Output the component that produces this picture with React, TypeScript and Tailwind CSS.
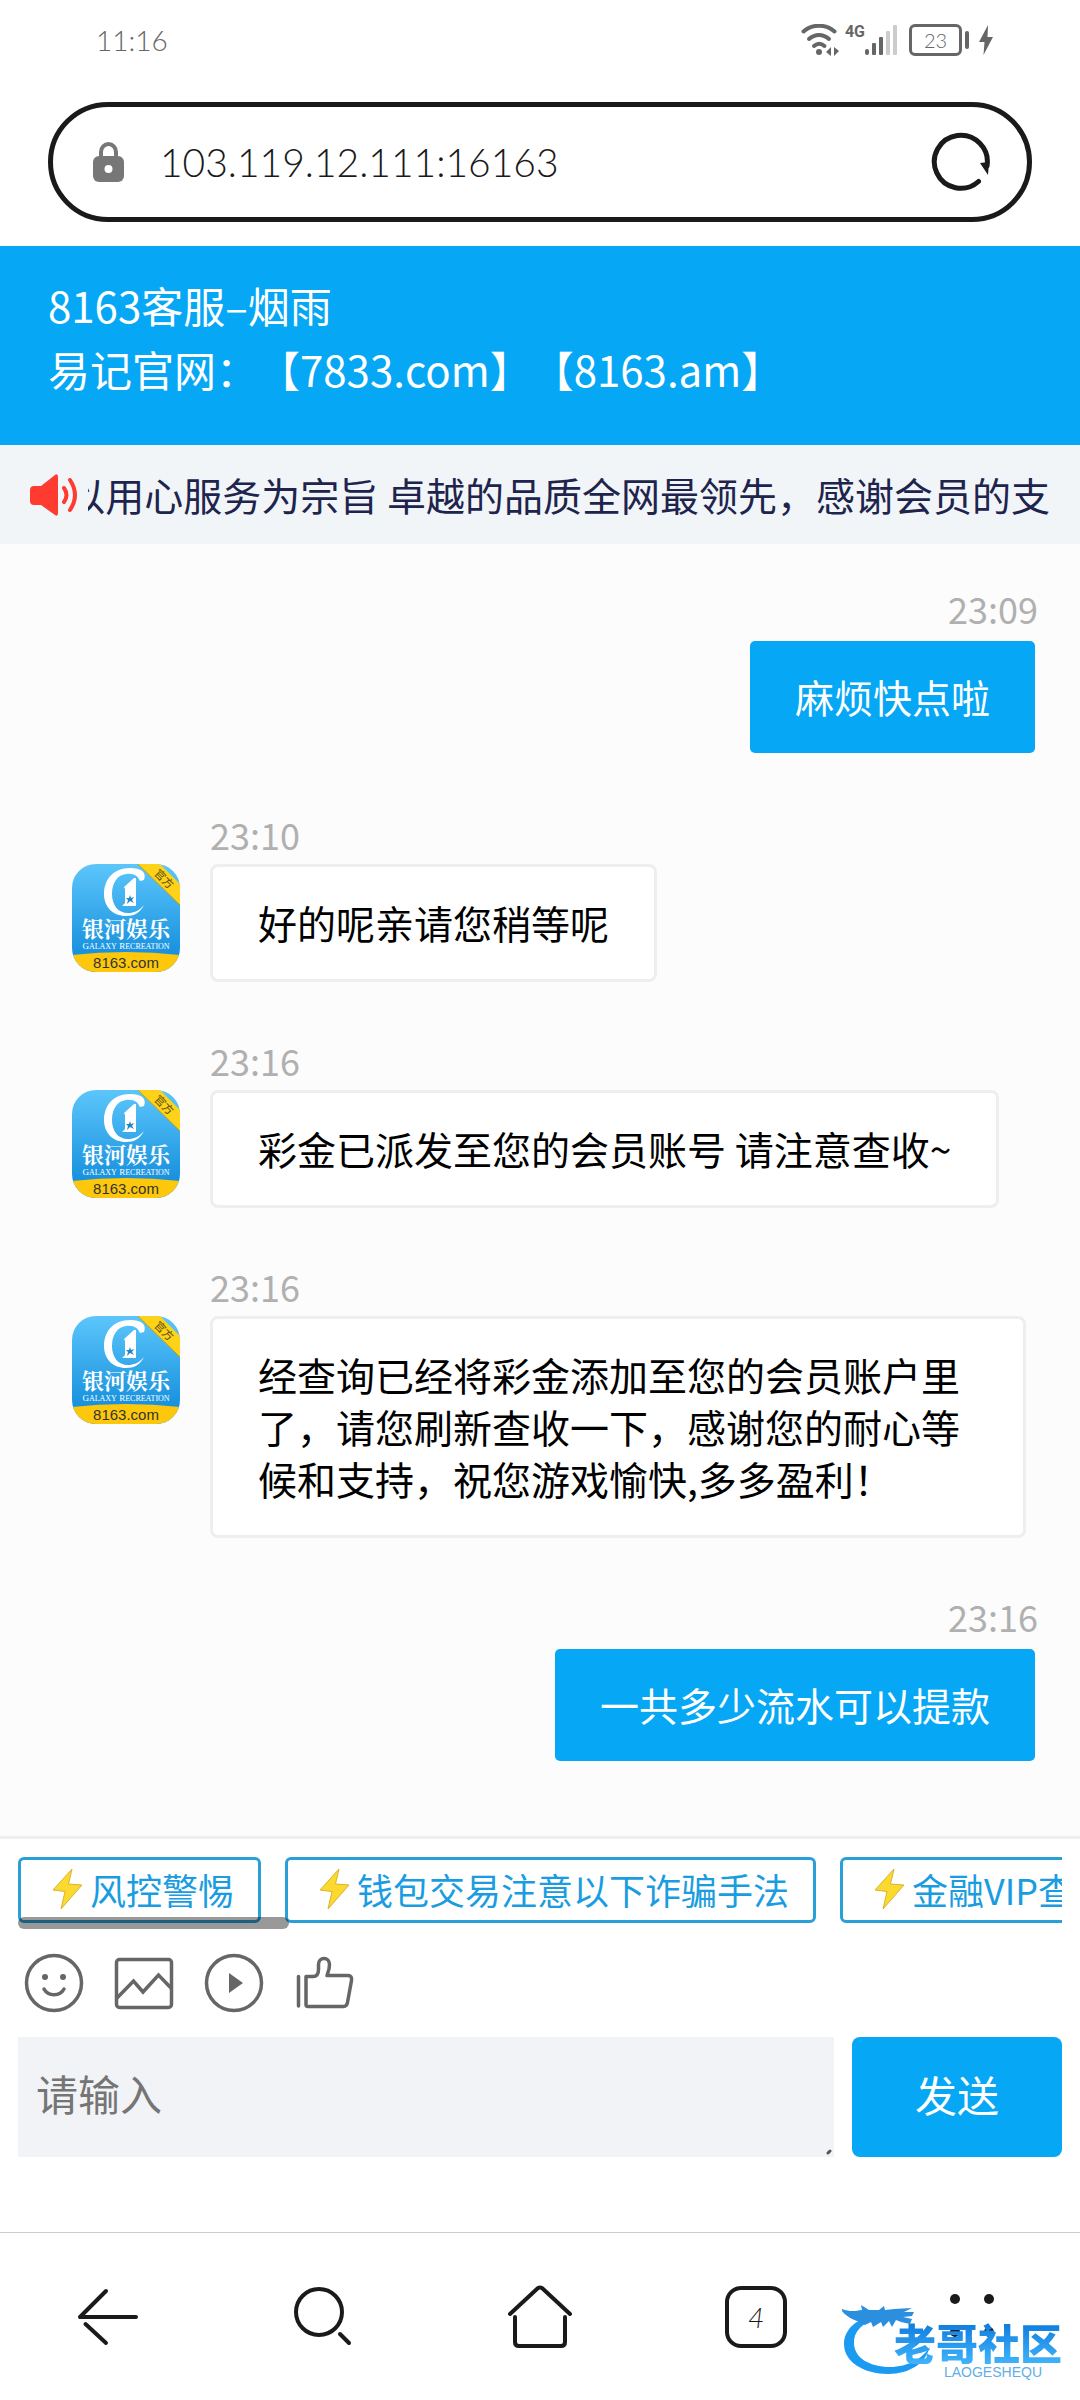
import { useState } from 'react';

type Message = {
  time: string;
  text: string;
  mine?: boolean;
};

const messages: Message[] = [
  { time: '23:09', text: '麻烦快点啦', mine: true },
  { time: '23:10', text: '好的呢亲请您稍等呢' },
  { time: '23:16', text: '彩金已派发至您的会员账号 请注意查收~' },
  { time: '23:16', text: '经查询已经将彩金添加至您的会员账户里了，请您刷新查收一下，感谢您的耐心等候和支持，祝您游戏愉快,多多盈利！' },
  { time: '23:16', text: '一共多少流水可以提款', mine: true },
];

const quickLinks = ['风控警惕', '钱包交易注意以下诈骗手法', '金融VIP查'];

function StatusBar() {
  return (
    <div className="flex h-20 items-center justify-between pl-24 pr-[87px] font-['Lato','Liberation_Sans',sans-serif] text-[#666]">
      <span className="text-[28px] font-light">11:16</span>
      <div className="flex items-center">
        <svg width="38" height="32" viewBox="0 0 38 32" fill="none" stroke="#666" strokeWidth="4" strokeLinecap="round">
          <path d="M2.500 7.500C11 -.2 25 -.2 33.500 7.500" />
          <path d="M8 15c6-5.500 14-5.500 20 0" />
          <path d="M13 22c3.500-3 7-3 10.500 0" />
          <circle cx="18" cy="28" r="3" fill="#666" stroke="none" />
          <path d="M25 28l5-5v9zM38 27l-5-4v9z" fill="#666" stroke="none" />
        </svg>
        <span className="ml-1.5 mb-4 font-['Roboto',sans-serif] text-base font-bold leading-4">4G</span>
        <svg width="32" height="32" viewBox="0 0 32 32">
          <rect x="0" y="25" width="4" height="6" rx="2" fill="#666" />
          <rect x="7" y="19" width="4" height="12" rx="1" fill="#666" />
          <rect x="14" y="13" width="4" height="18" rx="1" fill="#666" />
          <rect x="21" y="7" width="4" height="24" rx="1" fill="#ccc" />
          <rect x="28" y="1" width="4" height="30" rx="1" fill="#ccc" />
        </svg>
        <span className="ml-3 flex h-8 w-[53px] items-center justify-center rounded-md border-3 border-[#666] text-xl font-light">23</span>
        <span className="ml-[3px] h-[18px] w-1 rounded-sm bg-[#666]" />
        <svg className="ml-2.5" width="14" height="30" viewBox="0 0 14 30" fill="#666">
          <path d="M9 0L0 17h5.500L4.500 30 14 12H8.500z" />
        </svg>
      </div>
    </div>
  );
}

function AddressBar() {
  return (
    <div className="mx-12 mt-[22px] mb-6 flex h-[120px] items-center rounded-full border-5 border-[#1a1a1a] bg-white pl-10 pr-9">
      <svg width="31" height="40" viewBox="0 0 31 40">
        <path d="M8 16V10a7.500 8 0 0 1 15 0v6" fill="none" stroke="#777" strokeWidth="4" />
        <rect x="0" y="14" width="31" height="26" rx="6" fill="#777" />
        <circle cx="15.500" cy="27" r="4" fill="#fff" />
      </svg>
      <input
        aria-label="URL"
        defaultValue="103.119.12.111:16163"
        className="ml-9 min-w-0 flex-1 bg-transparent font-['Lato','Liberation_Sans',sans-serif] text-[39px] font-light text-[#1a1a1a] outline-none"
      />
      <button type="button" aria-label="刷新">
        <svg width="60" height="60" viewBox="0 0 60 60" fill="none">
          <path d="M47.500 49.500A26.500 26.500 0 1 1 56 34" stroke="#1a1a1a" strokeWidth="5" strokeLinecap="round" />
          <path d="M49 31l9-1-1 13z" fill="#1a1a1a" />
        </svg>
      </button>
    </div>
  );
}

function Notice() {
  return (
    <div className="flex h-[99px] items-center bg-[#f1f5f8] px-[30px]">
      <svg className="shrink-0" width="48" height="42" viewBox="0 0 48 42">
        <path d="M4 12h7L25 1q3-2 3 2v36q0 4-3 2L11 31H4q-4 0-4-4V16q0-4 4-4z" fill="#ff3b30" />
        <path d="M34 14q5 7 0 14M40 6q10 15 0 30" fill="none" stroke="#ff3b30" strokeWidth="4" strokeLinecap="round" />
      </svg>
      <div className="ml-2.5 flex min-w-0 flex-1 justify-end overflow-hidden">
        <p className="pb-0.5 text-[39px] leading-[52px] whitespace-nowrap text-[#20244d]">
          以用心服务为宗旨 卓越的品质全网最领先，感谢会员的支
        </p>
      </div>
    </div>
  );
}

function Avatar() {
  return (
    <svg className="mt-[52px] shrink-0" width="108" height="108" viewBox="0 0 108 108">
      <defs>
        <linearGradient id="sky" x1="0" y1="0" x2="0" y2="1">
          <stop offset="0" stopColor="#5cc6fb" />
          <stop offset="1" stopColor="#0a86d8" />
        </linearGradient>
        <clipPath id="tile">
          <rect width="108" height="108" rx="24" />
        </clipPath>
      </defs>
      <g clipPath="url(#tile)">
        <rect width="108" height="108" fill="url(#sky)" />
        <path d="M66 0h22l20 20v21z" fill="#ffd21a" />
        <path d="M66 0l42 41" stroke="#c9a400" strokeWidth="1" />
        <text x="92" y="19" fontSize="11" textAnchor="middle" transform="rotate(45 92 15)" fill="#5a4a10">官方</text>
        <path
          d="M72 16C75 8 69 4 58 4 41 4 32 16 32 30c0 13 9 22 22 22 8 0 14-3 18-11-5 6-10 8-16 8-10 0-16-8-16-19 0-12 6-19 14-20 8-1 12 2 14 7z"
          fill="#fff"
        />
        <path d="M62 14h2v28H50l3-3V25l-1-2z" fill="#fff" />
        <path d="M58 31l1 3 3-1-2 3 2 3-4-2-3 3 1-4-2-2h3z" fill="#2187c4" />
        <text x="54" y="73" fontSize="22" fontWeight="700" textAnchor="middle" fill="#fff" fontFamily="Noto Serif CJK SC, Noto Sans CJK SC">银河娱乐</text>
        <text x="54" y="85" fontSize="9" textAnchor="middle" fill="#fff" fontFamily="Liberation Serif">
          G<tspan fontSize="8">ALAXY</tspan> R<tspan fontSize="8">ECREATION</tspan>
        </text>
        <path d="M0 91q54-6 108 0v17H0z" fill="#fdc80c" />
        <text x="54" y="104" fontSize="15" textAnchor="middle" fill="#333" fontFamily="Liberation Sans">8163.com</text>
      </g>
    </svg>
  );
}

function MessageRow({ message }: { message: Message }) {
  if (message.mine) {
    return (
      <div className="flex flex-col items-end">
        <time className="mb-2 text-4xl leading-[44px] text-[#b0b0b0]">{message.time}</time>
        <p className="rounded-lg border-3 border-transparent bg-[#06a7f5] bg-clip-padding px-[45px] pt-[29px] pb-[31px] text-[39px] leading-[52px] text-white">
          {message.text}
        </p>
      </div>
    );
  }

  return (
    <div className="flex items-start gap-[30px]">
      <Avatar />
      <div className="max-w-[816px]">
        <time className="mb-2 block text-4xl leading-[44px] text-[#b0b0b0]">{message.time}</time>
        <p className="w-fit rounded-lg border-3 border-[#eee] bg-white px-[45px] pt-[29px] pb-[31px] text-[39px] leading-[52px] text-black">
          {message.text}
        </p>
      </div>
    </div>
  );
}

function Bolt() {
  return (
    <svg width="45" height="42" viewBox="0 0 45 42">
      <path d="M27 1L8 22l12 1.500L16 41l21-24-13.500-1z" fill="#fbd92e" stroke="#d9b430" strokeWidth="1" strokeLinejoin="round" />
    </svg>
  );
}

function Toolbar() {
  return (
    <div className="mt-[30px] flex gap-[30px] pl-1.5 text-[#666]">
      <button type="button" aria-label="表情">
        <svg width="60" height="60" viewBox="0 0 60 60" fill="none" stroke="currentColor" strokeWidth="3.500">
          <circle cx="30" cy="30" r="27.500" />
          <circle cx="21" cy="24" r="3" fill="currentColor" stroke="none" />
          <circle cx="39" cy="24" r="3" fill="currentColor" stroke="none" />
          <path d="M20 36c4 7.500 16 7.500 20 0" strokeLinecap="round" />
        </svg>
      </button>
      <button type="button" aria-label="图片">
        <svg width="60" height="60" viewBox="0 0 60 60" fill="none" stroke="currentColor" strokeWidth="3.500">
          <rect x="2.500" y="6.500" width="55" height="48" rx="3" />
          <path d="M3 45l16.500-17L29 39l15.500-17L57 35" />
        </svg>
      </button>
      <button type="button" aria-label="视频">
        <svg width="60" height="60" viewBox="0 0 60 60" fill="none" stroke="currentColor" strokeWidth="3.500">
          <circle cx="30" cy="30" r="27.500" />
          <path d="M25 20l14 10-14 10z" fill="currentColor" stroke="none" />
        </svg>
      </button>
      <button type="button" aria-label="点赞">
        <svg width="60" height="60" viewBox="0 0 60 60" fill="none" stroke="currentColor" strokeWidth="3.500" strokeLinejoin="round" strokeLinecap="round">
          <path d="M4.500 23.500V53" />
          <path d="M12 23.500h7c4 0 5.500-3 5.500-7v-5c0-8 11-8 11 0 0 5-1 7-2.500 11h21c3 0 4 2 3.500 5l-4 22c-.5 3-2 4-4 4H14c-2 0-2-1-2-2z" />
        </svg>
      </button>
    </div>
  );
}

function Watermark() {
  return (
    <div className="pointer-events-none absolute right-[18px] bottom-5 flex items-end">
      <svg className="-mr-9 mb-1" width="88" height="76" viewBox="0 0 88 76">
        <path
          d="M40 13C14 17 2 30 2 44c0 18 20 30 44 30 22 0 38-11 42-28-6 12-22 21-40 21C28 67 12 58 12 43 12 30 22 21 40 18z"
          fill="#1a9af0"
        />
        <path
          d="M0 9c8 3 13 2 20 1l-1-5 8 5 10 0 5-4 1 4 9-1 18-1-8 4 10 0-2 4-9 1 9 2-2 5-9-2-5-2-4 7-3-6-6 6-2-5-8 5-2-5-6 3c-8-5-17-6-23-14z"
          fill="#2b8fe0"
        />
      </svg>
      <div className="flex flex-col items-end">
        <span className="bg-linear-to-b from-[#0878dc] to-[#3fb4fb] bg-clip-text text-[42px] leading-11 font-black text-transparent">老哥社区</span>
        <span className="pr-5 font-['Liberation_Sans',sans-serif] text-sm leading-4 text-[#62aee8]">LAOGESHEQU</span>
      </div>
    </div>
  );
}

function BrowserNav() {
  return (
    <nav className="relative grid h-[168px] grid-cols-5 border-t border-[#ccc] bg-white text-[#1a1a1a]">
      <button type="button" aria-label="后退" className="flex items-center justify-center">
        <svg width="64" height="64" viewBox="0 0 64 64" fill="none" stroke="currentColor" strokeWidth="4" strokeLinecap="round">
          <path d="M30 6L4 32h56" strokeLinejoin="round" />
          <path d="M9.500 39L30 58" />
        </svg>
      </button>
      <button type="button" aria-label="搜索" className="flex items-center justify-center">
        <svg width="64" height="64" viewBox="0 0 64 64" fill="none" stroke="currentColor" strokeWidth="4" strokeLinecap="round">
          <circle cx="27" cy="27" r="23" />
          <path d="M48 49l9 9" />
        </svg>
      </button>
      <button type="button" aria-label="主页" className="flex items-center justify-center">
        <svg width="68" height="64" viewBox="0 0 68 64" fill="none" stroke="currentColor" strokeWidth="4" strokeLinecap="round" strokeLinejoin="round">
          <path d="M4 29L32 3q2-1 4 0l28 26" />
          <path d="M9 32v25q0 4 4 4h42q4 0 4-4V32" />
        </svg>
      </button>
      <button type="button" className="flex items-center justify-center">
        <span className="flex h-[62px] w-[62px] items-center justify-center rounded-2xl border-4 border-[#1a1a1a] font-['Lato',sans-serif] text-[28px] font-light italic">
          4
        </span>
      </button>
      <button type="button" aria-label="菜单" className="flex items-center justify-center">
        <svg width="64" height="64" viewBox="0 0 64 64" fill="currentColor">
          <circle cx="15" cy="14" r="5" />
          <circle cx="49" cy="14" r="5" />
          <circle cx="15" cy="47" r="5" />
          <circle cx="49" cy="47" r="5" />
        </svg>
      </button>
      <Watermark />
    </nav>
  );
}

export default function App() {
  const [draft, setDraft] = useState('');

  return (
    <div className="flex min-h-screen flex-col bg-white font-['Noto_Sans_CJK_SC',sans-serif]">
      <StatusBar />
      <AddressBar />

      <header className="bg-[#06a7f5] px-12 pt-[27px] pb-11 text-[42px] leading-[64px] text-white [text-spacing-trim:space-all]">
        <h1>8163客服–烟雨</h1>
        <p>易记官网：【7833.com】【8163.am】</p>
      </header>

      <Notice />

      <main className="flex flex-1 flex-col gap-14 bg-[#fcfcfc] pt-[42px] pr-[42px] pb-[72px] pl-[72px]">
        {messages.map((message, i) => (
          <MessageRow key={i} message={message} />
        ))}
      </main>

      <section className="border-t-3 border-[#eee] px-[18px] pt-[18px] pb-[75px]">
        <div className="relative">
          <div className="flex gap-6 overflow-hidden">
            {quickLinks.map((label) => (
              <button
                key={label}
                type="button"
                className="flex h-[66px] shrink-0 items-center rounded-md border-3 border-[#2b9fd8] px-6 pb-0.5 text-4xl leading-[52px] whitespace-nowrap text-[#1a9de0]"
              >
                <Bolt />
                {label}
              </button>
            ))}
          </div>
          {/* scroll thumb */}
          <div className="absolute top-[60px] left-0 h-3 w-[26%] rounded-md bg-black/40" />
        </div>

        <Toolbar />

        <form className="mt-6 flex gap-[18px]" onSubmit={(e) => e.preventDefault()}>
          <div className="relative flex min-w-0 flex-1">
            <textarea
              aria-label="请输入"
              placeholder="请输入"
              value={draft}
              onChange={(e) => setDraft(e.target.value)}
              className="h-[120px] w-full resize-none bg-[#f2f3f7] px-[18px] py-6 text-[42px] leading-[64px] outline-none placeholder:text-[#757575]"
            />
            <svg className="absolute right-0.5 bottom-0.5" width="6" height="6" viewBox="0 0 6 6">
              <path d="M2 4l2-2" stroke="#555" strokeWidth="3" strokeLinecap="round" />
            </svg>
          </div>
          <button type="submit" className="h-[120px] w-[210px] rounded-lg bg-[#06a7f5] pb-2 text-[42px] text-white">
            发送
          </button>
        </form>
      </section>

      <BrowserNav />
    </div>
  );
}
